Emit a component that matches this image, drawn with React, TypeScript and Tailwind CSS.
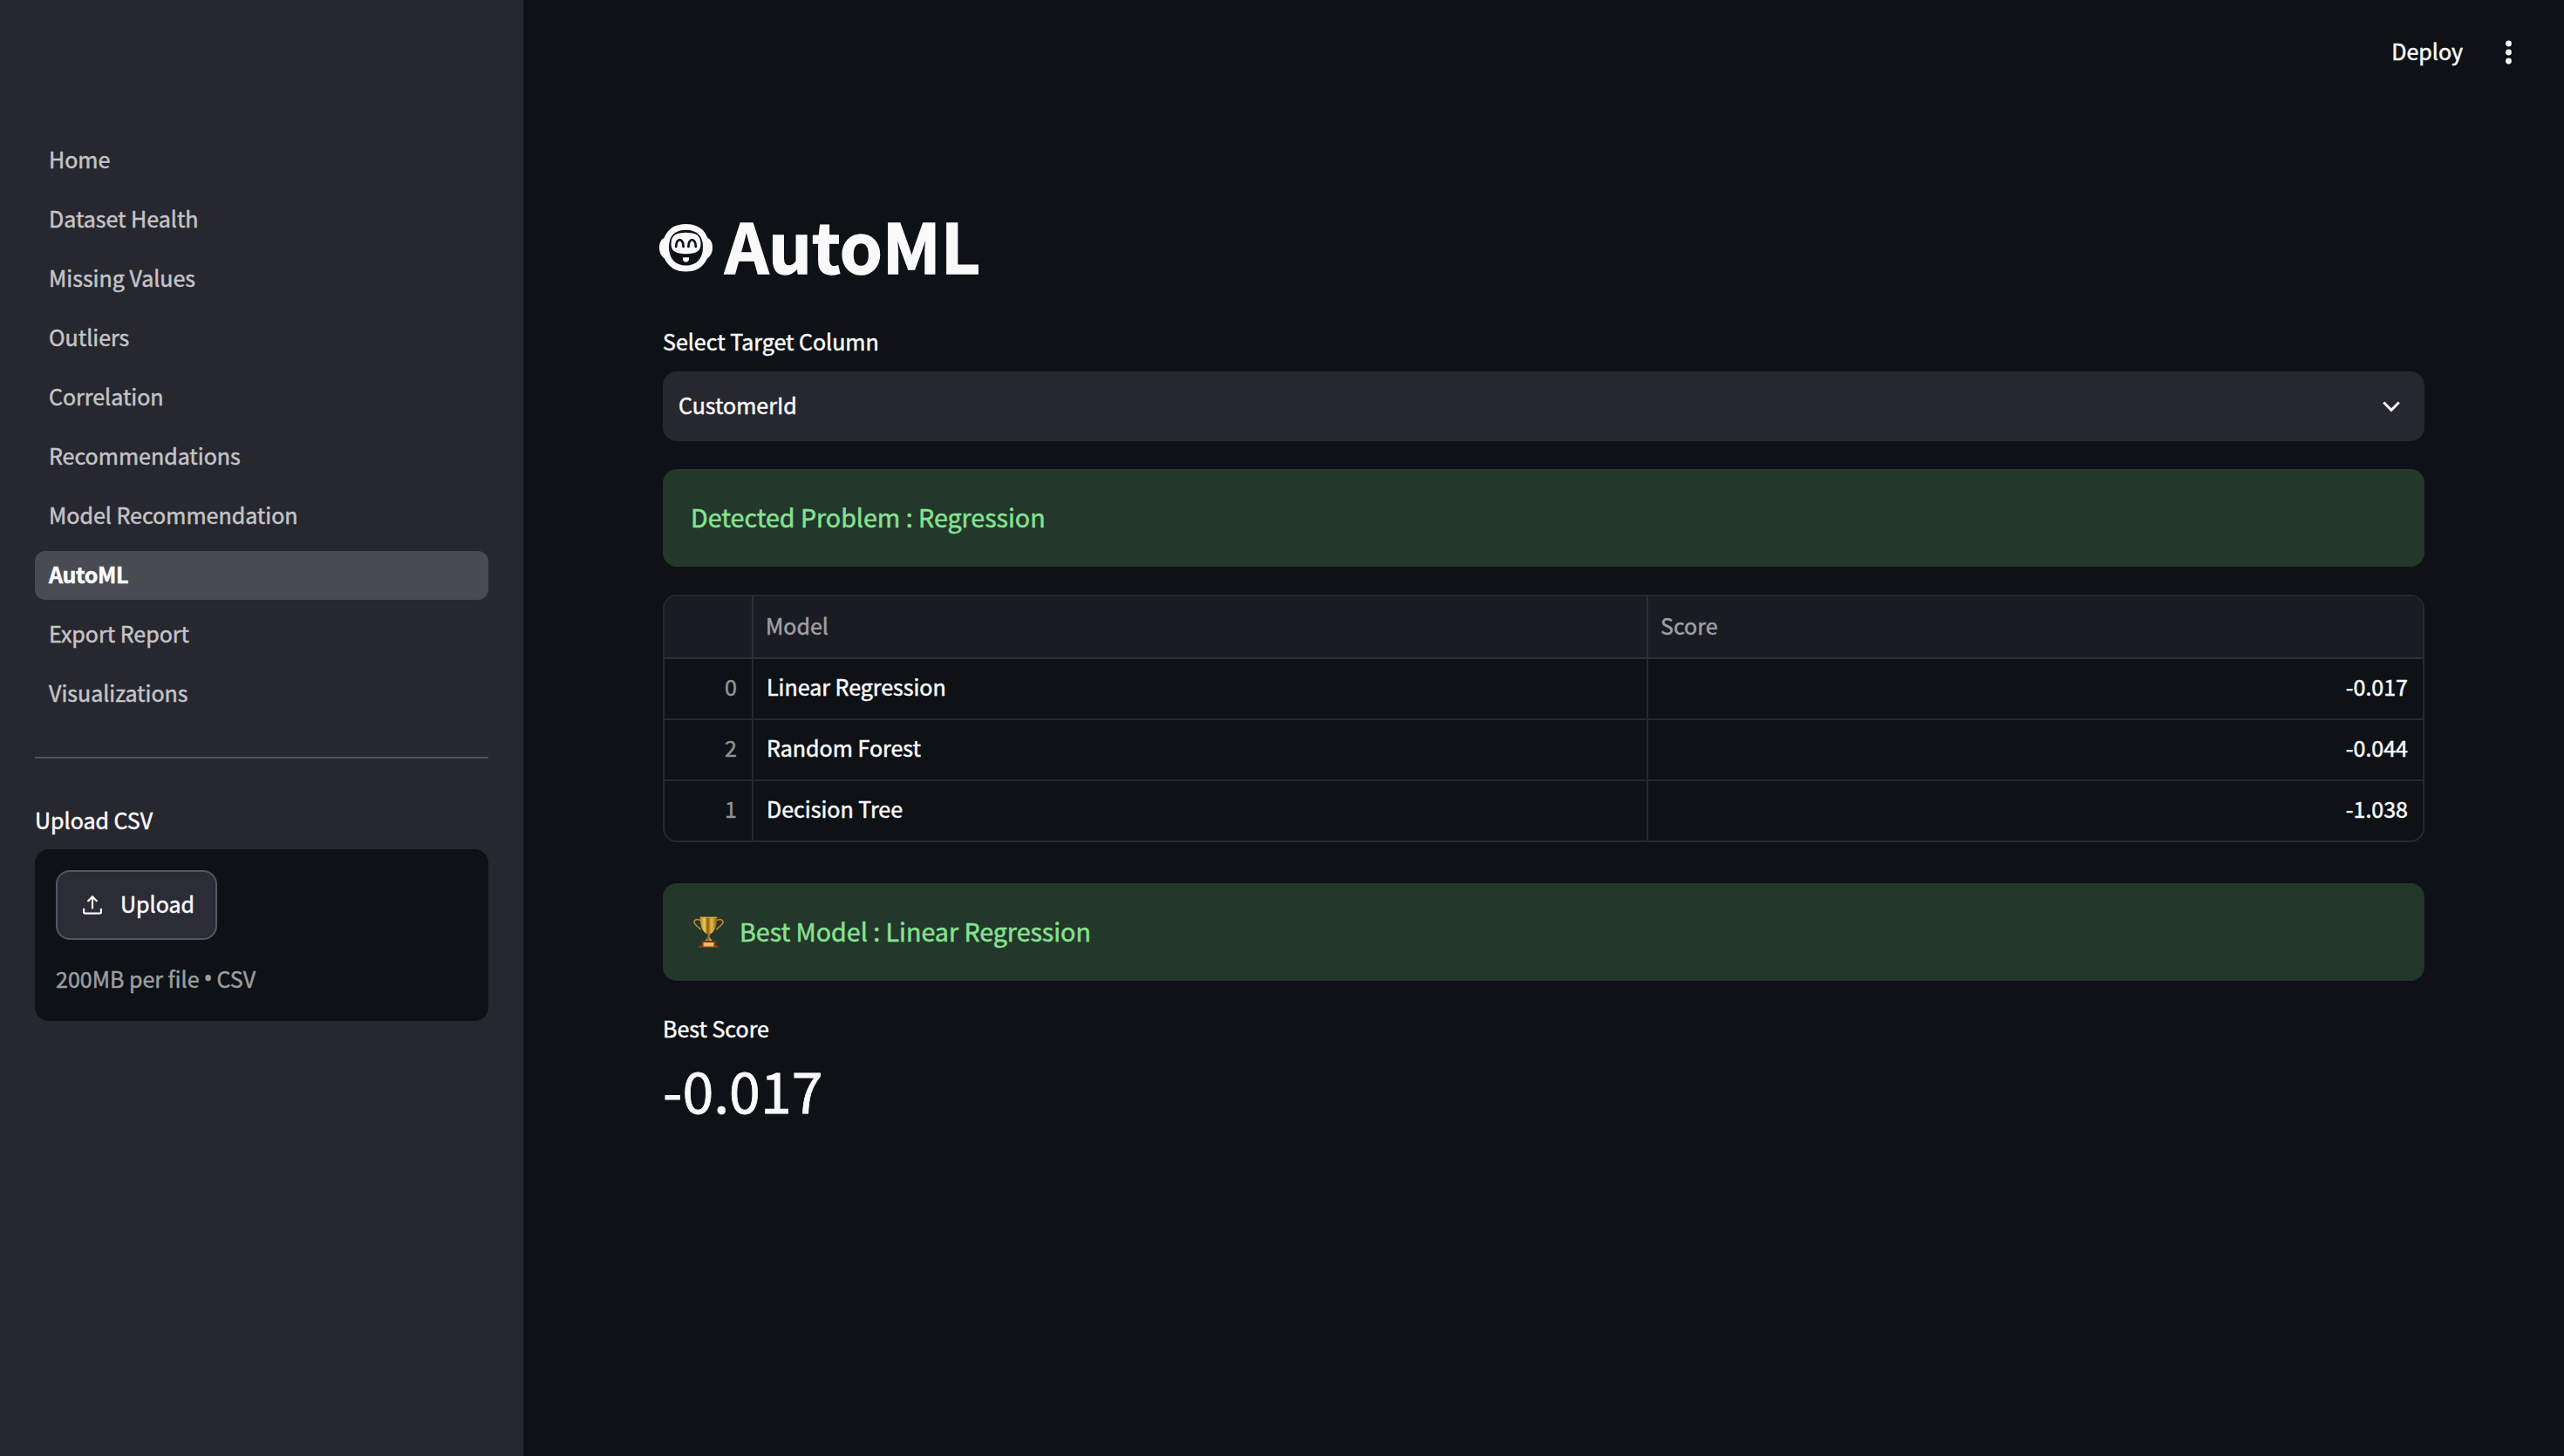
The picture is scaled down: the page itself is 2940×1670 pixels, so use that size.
import React, { useState } from 'react';

const PAGES = [
  'Home',
  'Dataset Health',
  'Missing Values',
  'Outliers',
  'Correlation',
  'Recommendations',
  'Model Recommendation',
  'AutoML',
  'Export Report',
  'Visualizations',
];

interface ModelResult {
  index: number;
  model: string;
  score: string;
}

const RESULTS: ModelResult[] = [
  { index: 0, model: 'Linear Regression', score: '-0.017' },
  { index: 2, model: 'Random Forest', score: '-0.044' },
  { index: 1, model: 'Decision Tree', score: '-1.038' },
];

const MonkeyIcon = () => (
  <svg className="h-[55px] w-[62px] shrink-0" viewBox="0 0 62 55" fill="none">
    <path
      d="M30.500 0C43 0 51 5 55.500 16C59.500 18 61 22 61 27C61 33 58.500 37 55 39.500C50 50 42 54.500 30.500 54.500C19 54.500 11 50 6 39.500C2.500 37 0 33 0 27C0 22 1.500 18 5.500 16C10 5 18 0 30.500 0Z"
      fill="#fafafa"
    />
    <path
      d="M30.500 6.800C42.500 6.800 50 13 50 26C50 40 42.500 47.500 30.500 47.500C18.500 47.500 11 40 11 26C11 13 18.500 6.800 30.500 6.800Z"
      fill="#0e1116"
    />
    <path
      d="M30.500 9.800C42 9.800 47.500 13 47.500 23C47.500 31 42.500 34.200 30.500 34.200C18.500 34.200 13.500 31 13.500 23C13.500 13 19 9.800 30.500 9.800Z"
      fill="#fafafa"
    />
    <path d="M19.200 26C19 15.500 27.800 15.500 27.600 26" stroke="#0e1116" strokeWidth="2.700" strokeLinecap="round" />
    <path d="M33.400 26C33.200 15.500 42 15.500 41.800 26" stroke="#0e1116" strokeWidth="2.700" strokeLinecap="round" />
    <path d="M27 38.200H34C34.500 41.500 33 43.500 30.500 43.500C28 43.500 26.500 41.500 27 38.200Z" fill="#fafafa" />
  </svg>
);

const TrophyIcon = () => (
  <svg className="h-9 w-[35px] shrink-0" viewBox="0 0 35 36" fill="none">
    <defs>
      <linearGradient id="cup" x1="8" y1="0" x2="27" y2="0" gradientUnits="userSpaceOnUse">
        <stop offset="0" stopColor="#b98424" />
        <stop offset=".25" stopColor="#ecca62" />
        <stop offset=".45" stopColor="#8f5e10" />
        <stop offset=".68" stopColor="#e6bd4c" />
        <stop offset="1" stopColor="#8c5a12" />
      </linearGradient>
    </defs>
    <path d="M9 5C5 2.500 1 3.500 1 7C1 10.500 6 11 8.500 15.500" stroke="#b8862f" strokeWidth="1.700" />
    <path d="M26 5C30 2.500 34 3.500 34 7C34 10.500 29 11 26.500 15.500" stroke="#b8862f" strokeWidth="1.700" />
    <path d="M7.500 1H27.500C27.500 10 25 17 19.500 20.500H15.500C10 17 7.500 10 7.500 1Z" fill="url(#cup)" />
    <path d="M8 1.200H27" stroke="#d9ab42" strokeWidth="1.200" />
    <path d="M16 20H19L18.600 24L22 28.500H13L16.400 24Z" fill="url(#cup)" />
    <path d="M9.500 28H25.500L26.500 33.500H8.500Z" fill="#7d3312" />
    <path d="M6.500 33.500H28.500V36H6.500Z" fill="#8a3b16" />
    <path d="M11.500 30H23.500V34.500H11.500Z" fill="#e3c064" />
  </svg>
);

const UploadIcon = () => (
  <svg className="h-[22px] w-[22px] shrink-0" viewBox="0 0 22 22" fill="none" stroke="#fafafa" strokeWidth="2.200">
    <path d="M11 15.500V2" />
    <path d="M5.500 7L11 1.500L16.500 7" />
    <path d="M1.100 15V19Q1.100 20.600 2.700 20.600H19.300Q20.900 20.600 20.900 19V15" />
  </svg>
);

const Sidebar = () => {
  const [active, setActive] = useState('AutoML');

  return (
    <aside className="flex w-[600px] shrink-0 flex-col bg-[#272730] px-10 pt-[156px]">
      <nav className="flex flex-col gap-3">
        {PAGES.map((page) => (
          <button
            key={page}
            onClick={() => setActive(page)}
            className={
              page === active
                ? 'h-14 rounded-xl bg-[#494b53] px-4 pb-1 text-left leading-[52px] font-bold tracking-[-0.4px] text-white'
                : 'h-14 rounded-xl px-4 pb-1 text-left leading-[52px] text-[#c4c4c6]'
            }
          >
            {page}
          </button>
        ))}
      </nav>
      <hr className="mt-11 border-t-2 border-[#52535b]" />
      <label className="mt-[50px] leading-10">Upload CSV</label>
      <div className="mt-[14px] h-[197px] rounded-2xl bg-[#0e1116] px-6 pt-6">
        <button className="flex h-20 w-[185px] items-center rounded-2xl border-2 border-[#55565e] bg-[#2c2c36] pl-[29px]">
          <UploadIcon />
          <span className="-mt-[3px] ml-[21px]">Upload</span>
        </button>
        <p className="mt-6 flex h-10 leading-10 text-[#9c9d9f]">
          <span>200MB per file</span>
          <span className="w-[20px] text-center font-['Noto_Sans'] text-[27px]">•</span>
          <span>CSV</span>
        </p>
      </div>
    </aside>
  );
};

const ResultsTable = ({ rows }: { rows: ModelResult[] }) => (
  <div className="mt-8 overflow-hidden rounded-2xl border-2 border-[#27292e]">
    <div className="grid h-[72px] grid-cols-[102px_1026px_1fr] border-b-2 border-[#2f313a] bg-[#1a1c24] leading-[66px] text-[#9fa0a3]">
      <span className="border-r-2 border-[#2f313a]" />
      <span className="border-r-2 border-[#2f313a] pl-[14px]">Model</span>
      <span className="pl-[14px]">Score</span>
    </div>
    {rows.map((row) => (
      <div
        key={row.index}
        className="grid h-[70px] grid-cols-[102px_1026px_1fr] border-b-2 border-[#27292e] leading-[63px] last:h-[68px] last:border-b-0"
      >
        <span className="border-r-2 border-[#27292e] pr-[17px] text-right text-[#919294]">{row.index}</span>
        <span className="border-r-2 border-[#27292e] pl-[15px]">{row.model}</span>
        <span className="pr-[17px] text-right">{row.score}</span>
      </div>
    ))}
  </div>
);

const App: React.FC = () => {
  const best = RESULTS[0];

  return (
    <div className="flex h-[1670px] w-[2940px] overflow-hidden bg-[#0e1116] font-['Noto_Sans_CJK_SC','Noto_Sans_CJK_JP',sans-serif] text-[25px] text-[#fafafa] [-webkit-text-stroke:0.5px_currentColor]">
      <Sidebar />
      <div className="flex flex-1 flex-col">
        <header className="flex h-[120px] items-center justify-end pr-[60px]">
          <button className="-mt-1 leading-10">Deploy</button>
          <svg className="ml-[49px] h-7 w-[7px]" viewBox="0 0 7 28" fill="#fafafa">
            <circle cx="3.500" cy="4" r="3.400" />
            <circle cx="3.500" cy="14" r="3.400" />
            <circle cx="3.500" cy="24" r="3.400" />
          </svg>
        </header>

        <main className="flex flex-col pr-40 pl-40">
          <h1 className="mt-[109px] -ml-1 flex h-[110px] items-center text-[78.500px] leading-[110px] font-bold [-webkit-text-stroke:1.500px_currentColor]">
            <MonkeyIcon />
            <span className="-mt-[8px] ml-[13px]">AutoML</span>
          </h1>

          <label className="mt-[32px] h-10 leading-10">Select Target Column</label>
          <button className="mt-[15px] flex h-20 items-center justify-between rounded-2xl bg-[#272730] pr-7 pl-[18px]">
            <span className="-mt-[2px]">CustomerId</span>
            <svg className="h-[13px] w-5" viewBox="0 0 20 13" fill="none" stroke="#fafafa" strokeWidth="3">
              <path d="M1.200 1.500L10 10.300L18.800 1.500" />
            </svg>
          </button>

          <div className="mt-8 flex h-28 items-center rounded-2xl bg-[#23372b] px-8 text-[28.600px] text-[#86e191]">
            <span className="-mt-[1px]">Detected Problem : Regression</span>
          </div>

          <ResultsTable rows={RESULTS} />

          <div className="mt-[47px] flex h-28 items-center rounded-2xl bg-[#23372b] pr-8 pl-[35px] text-[28.600px] text-[#86e191]">
            <TrophyIcon />
            <span className="-mt-[1px] ml-[18px]">Best Model : {best.model}</span>
          </div>

          <p className="mt-[34px] leading-10">Best Score</p>
          <p className="mt-[7px] text-[64.500px] leading-[86px] [-webkit-text-stroke:0.800px_currentColor]">{best.score}</p>
        </main>
      </div>
    </div>
  );
};

export default App;
